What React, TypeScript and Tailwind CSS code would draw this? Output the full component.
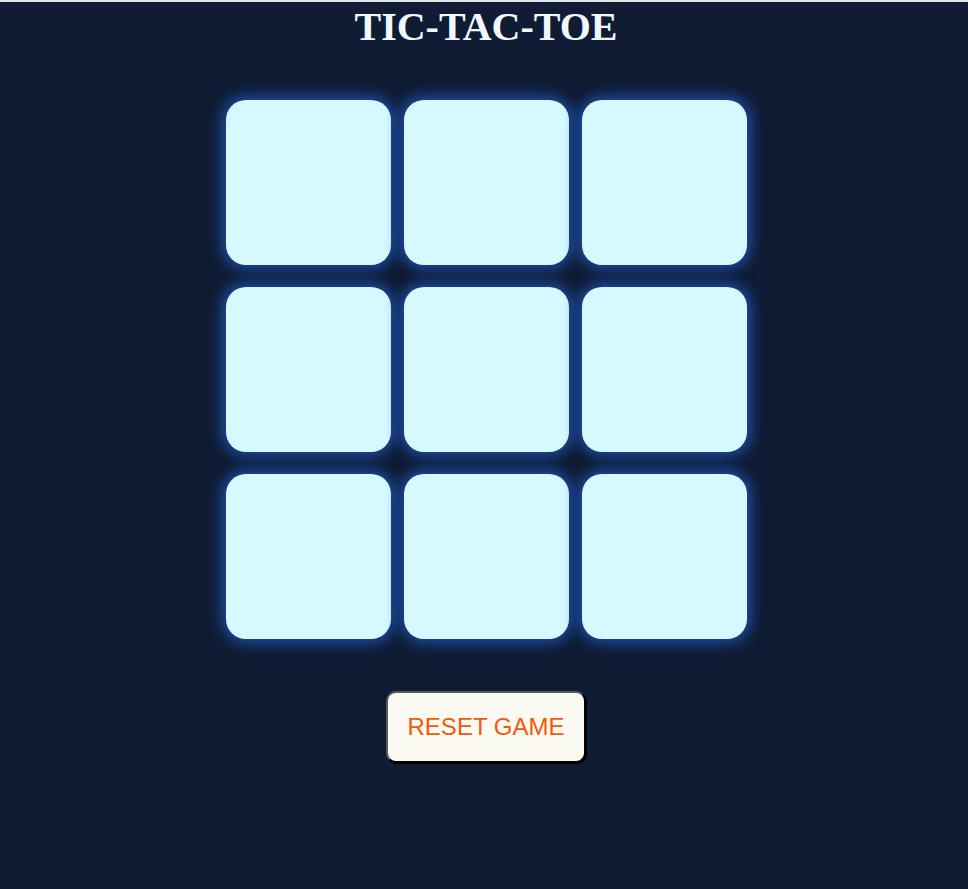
import React, { useState } from "react";

export default function App() {
  const [board, setBoard] = useState<string[]>(Array(9).fill(""));
  const [turn, setTurn] = useState("X");

  const handleClick = (i: number) => {
    if (board[i]) return;
    const next = [...board];
    next[i] = turn;
    setBoard(next);
    setTurn(turn === "X" ? "O" : "X");
  };

  const resetGame = () => {
    setBoard(Array(9).fill(""));
    setTurn("X");
  };

  return (
    <div className="min-h-[889px] bg-[#0f1c33] border-t-2 border-[#e2e4e8] pl-[4px] flex flex-col items-center">
      <h1 className="mt-[4px] text-[40px] leading-[42px] font-bold text-[#f0f8ff] font-['Liberation_Serif',serif]">
        TIC-TAC-TOE
      </h1>
      <div className="mt-[52px] grid grid-cols-[165px_165px_165px] gap-x-[13px] gap-y-[22px]">
        {board.map((cell, i) => (
          <button
            key={i}
            onClick={() => handleClick(i)}
            className="w-[165px] h-[165px] rounded-[20px] bg-[#d6f8ff] shadow-[0_0_14px_4px_#1e4ea8] text-[#0f1c33] text-6xl font-bold font-['Liberation_Sans',sans-serif]"
          >
            {cell}
          </button>
        ))}
      </div>
      <button
        onClick={resetGame}
        className="mt-[52px] w-[200px] h-[72px] rounded-[10px] bg-[#fafaf2] border-2 border-t-[#5a5a5a] border-l-[#5a5a5a] border-r-black border-b-black shadow-[1px_1px_0_#000] text-[#f05a0a] text-[24px] font-['Liberation_Sans',sans-serif]"
      >
        RESET GAME
      </button>
    </div>
  );
}
